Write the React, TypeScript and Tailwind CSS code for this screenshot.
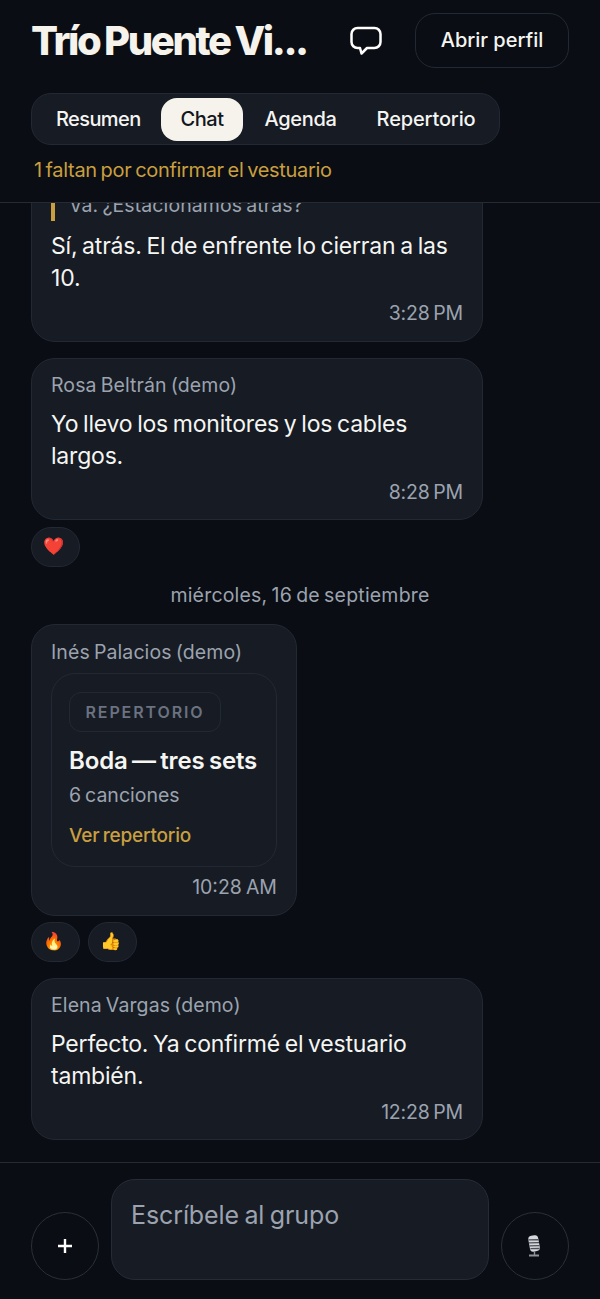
const font = "[font-family:Inter,'Noto_Sans',sans-serif] [word-spacing:-1.5px]";

function Tab({ label, active, className }: { label: string; active?: boolean; className?: string }) {
  return (
    <div
      className={`flex h-[43px] items-center rounded-[16px] px-[20px] text-[20px] font-medium ${className} ${
        active ? "bg-[#f5f3ec] text-[#12161d]" : "text-[#f5f5f2]"
      }`}
    >
      {label}
    </div>
  );
}

function Reaction({ emoji }: { emoji: React.ReactNode }) {
  return (
    <div className="flex h-[40px] w-[49px] items-center justify-center rounded-full border border-[#232933] bg-[#161b24] pr-[4px] text-[17px]">
      {emoji}
    </div>
  );
}

function Bubble({ name, text, time }: { name: string; text: string; time: string }) {
  return (
    <div className="w-[452px] rounded-[24px] border border-[#232933] bg-[#161b24] px-[19px] pt-[13px] pb-[14px]">
      <div className="text-[19.5px] leading-[26px] tracking-[0.1px] text-[#9ca3af]">{name}</div>
      <div className="mt-[10px] text-[23px] leading-[32px] tracking-[-0.2px] text-[#f5f5f2]">{text}</div>
      <div className="mt-[7px] text-right text-[19.5px] leading-[26px] tracking-[-0.2px] text-[#9ca3af]">{time}</div>
    </div>
  );
}

export default function App() {
  return (
    <div className={`flex h-[1299px] w-[600px] flex-col overflow-hidden bg-[#0a0d13] ${font}`}>
      <header className="h-[203px] shrink-0 border-b border-[#262b33] px-[31px]">
        <div className="flex h-[80px] items-center">
          <h1 className="mt-[2px] w-[284px] text-[40px] font-extrabold leading-none tracking-[-2.4px] whitespace-nowrap text-[#f5f3ec]">
            Trío Puente Vi...
          </h1>
          <svg className="ml-[33px] mt-[2px] size-[36px] text-white" viewBox="0 0 36 36" fill="none" stroke="currentColor" strokeWidth={2.5} strokeLinejoin="round">
            <path d="M9.5 5h17a6 6 0 0 1 6 6v8a6 6 0 0 1-6 6h-7.5l-5.5 5.5-1.5-5.5h-2.5a6 6 0 0 1-6-6v-8a6 6 0 0 1 6-6z" />
          </svg>
          <button className="ml-[31px] flex h-[55px] w-[154px] items-center justify-center rounded-[20px] border border-[#232933] text-[20px] font-medium text-[#f5f5f2]">
            Abrir perfil
          </button>
        </div>
        <div className="mt-[13px] flex h-[52px] w-[469px] items-center rounded-[20px] border border-[#232933] bg-[#161b24] pl-[4px]">
          <Tab label="Resumen" className="tracking-[-0.6px]" />
          <Tab label="Chat" active className="tracking-[-0.5px]" />
          <Tab label="Agenda" className="ml-px tracking-[-0.3px]" />
          <Tab label="Repertorio" className="tracking-[-0.15px]" />
        </div>
        <p className="mt-[12px] pl-[3px] text-[20px] leading-[26px] tracking-[-0.33px] text-[#c99f3f]">
          1 faltan por confirmar el vestuario
        </p>
      </header>

      <main className="flex min-h-0 flex-1 flex-col justify-end gap-[16px] overflow-hidden px-[31px] pb-[22px]">
        <div className="w-[452px] shrink-0 rounded-[24px] border border-[#232933] bg-[#161b24] px-[19px] pt-[13px] pb-[15px]">
          <div className="border-l-[4px] border-[#c99f3f] py-[3px] pl-[14px] text-[19.5px] leading-[26px] tracking-[0.1px] text-[#9ca3af]">
            Va. ¿Estacionamos atrás?
          </div>
          <div className="mt-[9px] text-[23px] leading-[32px] tracking-[-0.2px] text-[#f5f5f2]">
            Sí, atrás. El de enfrente lo cierran a las 10.
          </div>
          <div className="mt-[6px] text-right text-[19.5px] leading-[26px] tracking-[-0.2px] text-[#9ca3af]">3:28 PM</div>
        </div>

        <div className="flex shrink-0 flex-col gap-[7px]">
          <Bubble name="Rosa Beltrán (demo)" text="Yo llevo los monitores y los cables largos." time="8:28 PM" />
          <div className="flex"><Reaction emoji="❤️" /></div>
        </div>

        <div className="-mt-px shrink-0 text-center text-[19.5px] leading-[26px] tracking-[0.2px] text-[#9ca3af]">
          miércoles, 16 de septiembre
        </div>

        <div className="flex shrink-0 flex-col gap-[6px]">
          <div className="w-[266px] rounded-[24px] border border-[#232933] bg-[#161b24] px-[19px] pt-[14px] pb-[15px]">
            <div className="text-[19.5px] leading-[26px] tracking-[0.1px] text-[#9ca3af]">Inés Palacios (demo)</div>
            <div className="mt-[8px] h-[194px] rounded-[24px] border border-[#232933] px-[17px] pt-[18px]">
              <div className="flex h-[40px] w-[152px] items-center justify-center rounded-[12px] border border-[#232933] text-[16px] font-semibold tracking-[1.9px] text-[#6b7280]">
                REPERTORIO
              </div>
              <div className="mt-[13px] text-[24px] font-semibold leading-[32px] tracking-[-0.15px] text-[#f5f5f2]">Boda — tres sets</div>
              <div className="mt-[5px] text-[19.5px] leading-[26px] text-[#9ca3af]">6 canciones</div>
              <div className="mt-[15px] text-[19px] font-medium leading-[26px] tracking-[-0.2px] text-[#c99f3f]">Ver repertorio</div>
            </div>
            <div className="mt-[7px] text-right text-[19.5px] leading-[26px] text-[#9ca3af]">10:28 AM</div>
          </div>
          <div className="flex gap-[8px]">
            <Reaction emoji="🔥" />
            <Reaction emoji="👍" />
          </div>
        </div>

        <div className="shrink-0">
          <Bubble name="Elena Vargas (demo)" text="Perfecto. Ya confirmé el vestuario también." time="12:28 PM" />
        </div>
      </main>

      <footer className="flex h-[137px] shrink-0 items-end gap-[12px] border-t border-[#262b33] px-[31px] pb-[19px]">
        <button className="flex size-[68px] shrink-0 items-center justify-center rounded-full border border-[#2a2f38] text-white">
          <svg className="size-[18px]" viewBox="0 0 18 18" fill="none" stroke="currentColor" strokeWidth={2.4}>
            <path d="M9 2v14M2 9h14" />
          </svg>
        </button>
        <div className="h-[101px] w-[379px] rounded-[24px] border border-[#262c36] bg-[#161b24] px-[19px] pt-[18px] text-[25px] leading-[34px] tracking-[-0.1px] text-[#9ca3af]">
          Escríbele al grupo
        </div>
        <button className="flex size-[68px] shrink-0 items-center justify-center rounded-full border border-[#2a2f38] pr-[3px]">
          <svg className="size-[24px]" viewBox="0 0 24 24" fill="none">
            <g transform="rotate(-10 12 9)">
              <rect x="7" y="1.5" width="10" height="16" rx="3.5" fill="#d5d7da" />
              <path d="M7 5l10 1.6M7 8l10 1.6M7 11l10 1.6M7.5 14l9 1.4" stroke="#4a4f58" strokeWidth={1.3} />
            </g>
            <path d="M7 21.5h10" stroke="#8d9198" strokeWidth={2} />
            <path d="M12.5 18v3" stroke="#8d9198" strokeWidth={1.4} />
          </svg>
        </button>
      </footer>
    </div>
  );
}
